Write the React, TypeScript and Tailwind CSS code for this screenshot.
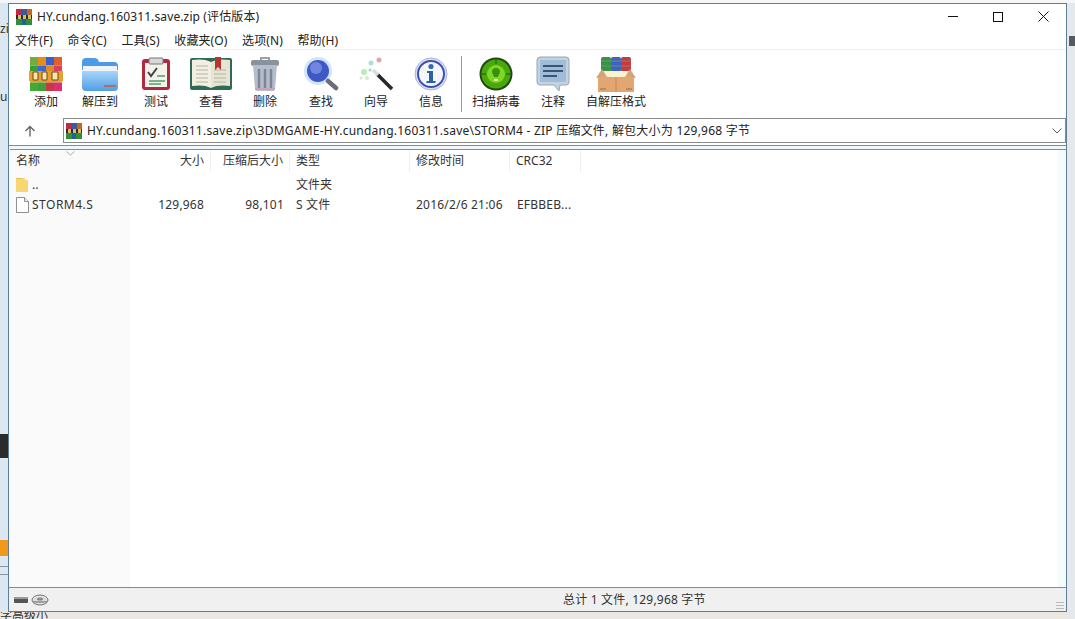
import React from "react";

const font = { fontFamily: '"Noto Sans","Noto Sans CJK SC",sans-serif' };

function Logo({ s = 16 }: { s?: number }) {
  return (
    <svg width={s} height={s} viewBox="0 0 16 16">
      <rect x="0" y="0" width="16" height="16" fill="#7a2a3a" />
      <rect x="0" y="0" width="5" height="6" fill="#c02a4a" />
      <rect x="5" y="0" width="6" height="6" fill="#3a5a9a" />
      <rect x="11" y="0" width="5" height="6" fill="#c06a20" />
      <rect x="0" y="6" width="16" height="4" fill="#2a2a30" />
      <rect x="2" y="6" width="3" height="4" fill="#d8c060" />
      <rect x="7" y="6" width="3" height="4" fill="#d8c060" />
      <rect x="12" y="6" width="3" height="4" fill="#d8c060" />
      <rect x="0" y="10" width="16" height="6" fill="#2f8f3a" />
      <rect x="6" y="10" width="4" height="6" fill="#245f9a" />
    </svg>
  );
}

function AddIcon() {
  const cols = [
    ["#6fae3a", "#3f9a3a", "#e8a020", "#47a83a"],
    ["#e88a20", "#3a6ad0", "#e8a020", "#3fa03a"],
    ["#3a60c8", "#e0892a", "#e8a020", "#c8384a"],
    ["#e0602a", "#d84060", "#e8a020", "#d83070"],
  ];
  return (
    <svg width="34" height="36" viewBox="0 0 34 36">
      {cols.map((c, i) =>
        c.map((f, j) => <rect key={`${i}${j}`} x={1 + i * 8} y={1 + j * 8.5} width="8" height="8.5" fill={f} />),
      )}
      <rect x="0" y="15" width="34" height="10" fill="#e8a030" />
      <path d="M4 16h5v8H4zM13 16h5v8h-5zM23 16h6v8h-6z" fill="#f6e7b0" stroke="#6a4a10" strokeWidth="1" />
    </svg>
  );
}

function FolderBlue() {
  return (
    <svg width="38" height="36" viewBox="0 0 38 36">
      <defs>
        <linearGradient id="fb" x1="0" y1="0" x2="0" y2="1">
          <stop offset="0" stopColor="#a9d6f8" />
          <stop offset="1" stopColor="#4e9ee8" />
        </linearGradient>
      </defs>
      <path d="M1 6a4 4 0 0 1 4-4h8a5 5 0 0 1 5 4h15a4 4 0 0 1 4 4v4H1z" fill="#4d9be8" />
      <rect x="2" y="10" width="34" height="7" fill="#eef4fa" />
      <path d="M1 15h36v16a4 4 0 0 1-4 4H5a4 4 0 0 1-4-4z" fill="url(#fb)" />
      <path d="M23 29h12v2H23z" fill="#b0705a" />
    </svg>
  );
}

function TestIcon() {
  return (
    <svg width="30" height="36" viewBox="0 0 30 36">
      <rect x="1" y="3" width="28" height="31" rx="3" fill="#b2283f" />
      <rect x="4" y="7" width="22" height="24" fill="#f4f2ea" />
      <rect x="8" y="2" width="14" height="6" rx="1" fill="#d8d8d8" stroke="#777" />
      <path d="M7 16l3 4 6-8" fill="none" stroke="#444" strokeWidth="2" />
      <path d="M16 20h8M8 25h16M8 28h12" stroke="#4f9f6f" strokeWidth="1.5" />
    </svg>
  );
}

function BookIcon() {
  return (
    <svg width="42" height="36" viewBox="0 0 42 36">
      <rect x="0" y="2" width="42" height="32" rx="2" fill="#2f6a55" />
      <path d="M2 4c6-1 14-1 19 2v26c-5-3-13-3-19-2z" fill="#f2efe2" />
      <path d="M40 4c-6-1-14-1-19 2v26c5-3 13-3 19-2z" fill="#e8e4d4" />
      <path d="M6 10h12M6 14h12M6 18h12M6 22h12M6 26h12M24 14h12M24 18h12M24 22h12M24 26h12" stroke="#b4b4a6" />
      <path d="M25 1h6v13l-3-3-3 3z" fill="#b8342f" />
    </svg>
  );
}

function TrashIcon() {
  return (
    <svg width="30" height="36" viewBox="0 0 30 36">
      <path d="M11 2h8v3h-8z" fill="none" stroke="#9aa0a8" strokeWidth="2" />
      <rect x="1" y="4" width="28" height="6" rx="2" fill="#8a929c" />
      <path d="M3 9h24l-2 24a2 2 0 0 1-2 2H7a2 2 0 0 1-2-2z" fill="#b4bdcc" />
      <path d="M9 13v19M15 13v19M21 13v19" stroke="#7d8694" strokeWidth="2.500" />
      <path d="M5 33h20" stroke="#d09ab0" strokeWidth="1.500" />
    </svg>
  );
}

function SearchIcon() {
  return (
    <svg width="36" height="36" viewBox="0 0 36 36">
      <circle cx="15" cy="15" r="14" fill="#cfe6f6" />
      <circle cx="15" cy="15" r="11" fill="#3f58c8" />
      <circle cx="13" cy="12" r="6" fill="#7086e0" />
      <path d="M25 25l8 7" stroke="#6a6f76" strokeWidth="4.500" strokeLinecap="round" />
    </svg>
  );
}

function WandIcon() {
  return (
    <svg width="38" height="36" viewBox="0 0 38 36">
      <path d="M20 18l15 15" stroke="#25282c" strokeWidth="3.500" />
      <path d="M16 14l5 5" stroke="#d8dde0" strokeWidth="3.500" />
      <circle cx="22" cy="4" r="2.500" fill="#e8a0b0" />
      <circle cx="14" cy="7" r="2.500" fill="#a8e0e0" />
      <circle cx="7" cy="16" r="3" fill="#b8ecb8" />
      <circle cx="13" cy="14" r="1.500" fill="#9fd8c0" />
      <circle cx="4" cy="22" r="1.500" fill="#cfeecf" />
      <circle cx="10" cy="22" r="2" fill="#d0f0c0" />
    </svg>
  );
}

function InfoIcon() {
  return (
    <svg width="34" height="36" viewBox="0 0 34 36">
      <circle cx="17" cy="18" r="16" fill="#dbe0f0" stroke="#aab4e0" />
      <circle cx="17" cy="18" r="13" fill="#f4f6fb" stroke="#3c50b8" strokeWidth="2" />
      <circle cx="17" cy="10.500" r="2.600" fill="#3a68b8" />
      <path d="M13 15h6v10h2.500v2h-9v-2H15v-8h-2z" fill="#2a62a8" />
    </svg>
  );
}

function ScanIcon() {
  return (
    <svg width="34" height="34" viewBox="0 0 34 34">
      <circle cx="17" cy="17" r="16.500" fill="#1f4a12" />
      <circle cx="17" cy="17" r="14.500" fill="#4aa80c" />
      <circle cx="17" cy="17" r="9" fill="#7cd824" />
      <path d="M17 11a4 4 0 0 1 4 4c0 2-2 3-2 5h-4c0-2-2-3-2-5a4 4 0 0 1 4-4z" fill="#3b8f10" />
      <path d="M15 22h4v2h-4z" fill="#e0f0a0" />
      <path d="M3 17h4M27 17h4M17 3v4" stroke="#2f7f10" strokeWidth="2" />
    </svg>
  );
}

function NoteIcon() {
  return (
    <svg width="34" height="36" viewBox="0 0 34 36">
      <path d="M4 1h26a3 3 0 0 1 3 3v22a3 3 0 0 1-3 3h-6l-1 6-5-6H4a3 3 0 0 1-3-3V4a3 3 0 0 1 3-3z" fill="#c4d2e0" stroke="#9aa6b4" />
      <path d="M4 4h26v22H4z" fill="#9fbcd8" />
      <path d="M7 10h20M7 15h20M7 20h14" stroke="#3a5676" strokeWidth="2" />
    </svg>
  );
}

function SfxIcon() {
  return (
    <svg width="42" height="36" viewBox="0 0 42 36">
      <rect x="6" y="1" width="10" height="15" rx="2" fill="#38904a" />
      <rect x="16" y="1" width="10" height="15" rx="2" fill="#3f62c0" />
      <rect x="26" y="1" width="10" height="15" rx="2" fill="#c63a44" />
      <path d="M6 5h30M6 10h30" stroke="#70b070" strokeOpacity=".6" />
      <path d="M7 15h28l-5 6H12z" fill="#fbf3d0" />
      <path d="M1 22l6-9 5 8zM41 22l-6-9-5 8z" fill="#cfa67a" />
      <path d="M3 21h36v15H3z" fill="#e2a673" />
      <path d="M21 21v15" stroke="#c58a58" />
      <path d="M5 33h6M31 33h6" stroke="#bb8a60" strokeWidth="2" />
    </svg>
  );
}

function FolderSmall() {
  return (
    <svg width="12" height="16" viewBox="0 0 12 16">
      <path d="M0 1h9v2h3v12H0z" fill="#f7d774" />
      <path d="M0 1h6v1H0z" fill="#e8c25a" />
    </svg>
  );
}

function FileSmall() {
  return (
    <svg width="13" height="16" viewBox="0 0 13 16">
      <path d="M.5.5h8l4 4v11H.5z" fill="#fff" stroke="#8f8f8f" />
      <path d="M8.500.5v4h4" fill="#eee" stroke="#8f8f8f" />
    </svg>
  );
}

function Tool({ label, w, children }: { label: string; w: string; children: React.ReactNode }) {
  return (
    <div className={`${w} flex flex-col items-center shrink-0`}>
      <div className="h-9 flex items-center justify-center">{children}</div>
      <div className="mt-[2px] text-[12px] leading-[16px] text-[#222] whitespace-nowrap">{label}</div>
    </div>
  );
}

function Col({ w, right, children, sep = true }: { w: string; right?: boolean; children: React.ReactNode; sep?: boolean }) {
  return (
    <div
      className={`${w} h-[22px] shrink-0 flex items-center px-[6px] text-[12px] text-[#333] ${right ? "justify-end" : ""} ${sep ? "border-r border-[#eeeeee]" : ""}`}
    >
      {children}
    </div>
  );
}

export default function App() {
  return (
    <div className="relative w-[1075px] h-[619px] overflow-hidden bg-[#ebe8e4]" style={font}>
      {/* desktop fragments behind the window */}
      <div className="absolute left-0 top-0 w-[8px] h-[612px] bg-[#dbe7f1]" />
      <div className="absolute left-0 top-[22px] w-[8px] h-[14px] overflow-hidden text-[12px] leading-[14px] text-[#333]">zi</div>
      <div className="absolute left-0 top-[90px] w-[8px] h-[14px] overflow-hidden text-[12px] leading-[14px] text-[#333]">u</div>
      <div className="absolute left-0 top-[434px] w-[8px] h-[24px] bg-[#2b2b2b]" />
      <div className="absolute left-0 top-[540px] w-[8px] h-[16px] bg-[#f09a1a]" />
      <div className="absolute left-0 top-[566px] w-[8px] h-px bg-[#8a949c]" />
      <div className="absolute left-0 top-[574px] w-[8px] h-px bg-[#8a949c]" />
      <div className="absolute right-0 top-0 w-[8px] h-[619px] bg-[#e6e9ec]" />
      <div className="absolute right-0 top-[36px] w-[6px] h-[10px] bg-[#555a60]" />
      <div className="absolute left-0 top-0 w-full h-[3px] bg-[#f4f6f8]" />
      <div className="absolute left-0 bottom-0 w-[60px] h-[7px] text-[12px] leading-[7px] text-[#333] overflow-hidden">字高级小</div>

      {/* window */}
      <div className="absolute left-[8px] top-[3px] w-[1059px] h-[609px] flex flex-col bg-[#eef8fd] border border-[#5b7f98]">
        {/* title bar */}
        <div className="h-[25px] shrink-0 flex items-center bg-white pl-[7px]">
          <Logo />
          <span className="ml-[5px] text-[12px] tracking-[0.12px] text-[#222]">HY.cundang.160311.save.zip (评估版本)</span>
          <div className="ml-auto flex items-center">
            <div className="w-[45px] h-[25px] flex items-center justify-center">
              <div className="w-[10px] h-px bg-[#111]" />
            </div>
            <div className="w-[46px] h-[25px] flex items-center justify-center">
              <div className="w-[10px] h-[10px] border border-[#111]" />
            </div>
            <div className="w-[45px] h-[25px] flex items-center justify-center">
              <svg width="11" height="11" viewBox="0 0 11 11">
                <path d="M.5.5l10 10M10.500.5l-10 10" stroke="#111" />
              </svg>
            </div>
          </div>
        </div>
        {/* menu */}
        <div className="h-[21px] shrink-0 flex items-center bg-white pl-[6px] pt-[3px] gap-[14.6px] text-[12px] tracking-[0.1px] text-[#222] border-b border-[#f0f0f0]">
          <span>文件(F)</span>
          <span>命令(C)</span>
          <span>工具(S)</span>
          <span>收藏夹(O)</span>
          <span>选项(N)</span>
          <span>帮助(H)</span>
        </div>
        {/* toolbar */}
        <div className="h-[68px] shrink-0 flex items-start bg-white pl-[9px] pt-[6px]">
          <Tool label="添加" w="w-[56px]"><AddIcon /></Tool>
          <Tool label="解压到" w="w-[52px]"><FolderBlue /></Tool>
          <Tool label="测试" w="w-[60px]"><TestIcon /></Tool>
          <Tool label="查看" w="w-[50px]"><BookIcon /></Tool>
          <Tool label="删除" w="w-[58px]"><TrashIcon /></Tool>
          <Tool label="查找" w="w-[54px]"><SearchIcon /></Tool>
          <Tool label="向导" w="w-[56px]"><WandIcon /></Tool>
          <Tool label="信息" w="w-[54px]"><InfoIcon /></Tool>
          <div className="w-px h-[56px] bg-[#9a9a9a] ml-[3px] shrink-0" />
          <Tool label="扫描病毒" w="w-[68px]"><ScanIcon /></Tool>
          <Tool label="注释" w="w-[46px]"><NoteIcon /></Tool>
          <Tool label="自解压格式" w="w-[80px]"><SfxIcon /></Tool>
        </div>
        {/* address */}
        <div className="h-[28px] shrink-0 flex items-start bg-white border-b border-[#8a8a8a]">
          <div className="w-[42px] h-[25px] flex items-center justify-center">
            <svg width="12" height="12" viewBox="0 0 12 12">
              <path d="M6 11.500V1.500M1.500 6L6 1.500 10.500 6" fill="none" stroke="#666" strokeWidth="1.400" />
            </svg>
          </div>
          <div className="w-[1004px] ml-[12px] h-[25px] flex items-center border border-[#8a8a8a] pl-[2px] bg-white">
            <Logo />
            <span className="ml-[5px] text-[12px] tracking-[0.23px] text-[#222] whitespace-nowrap">
              HY.cundang.160311.save.zip\3DMGAME-HY.cundang.160311.save\STORM4 - ZIP 压缩文件, 解包大小为 129,968 字节
            </span>
            <svg className="ml-auto mr-[3px]" width="10" height="6" viewBox="0 0 10 6">
              <path d="M.5.5L5 5 9.500.5" fill="none" stroke="#555" />
            </svg>
          </div>
        </div>
        {/* list */}
        <div className="flex-1 min-h-0 flex flex-col bg-white mt-[3px] ml-[1px] border-t border-[#8a8a8a] relative">
          <div className="absolute left-0 top-0 bottom-0 w-[120px] bg-[#fafafa]" />
          <div className="absolute right-0 top-0 bottom-0 w-[8px] bg-[#f3fbff]" />
          <svg className="absolute left-[56px] top-[1px]" width="9" height="5" viewBox="0 0 9 5">
            <path d="M.5.5L4.500 4 8.500.5" fill="none" stroke="#aaa" />
          </svg>
          <div className="relative flex h-[22px] shrink-0">
            <Col w="w-[120px]" sep={false}>名称</Col>
            <Col w="w-[81px]" right>大小</Col>
            <Col w="w-[79px]" right>压缩后大小</Col>
            <Col w="w-[120px]">类型</Col>
            <Col w="w-[100px]">修改时间</Col>
            <Col w="w-[71px]">CRC32</Col>
          </div>
          <div className="relative flex h-[20px] mt-[3px] items-center shrink-0">
            <div className="w-[120px] flex items-center pl-[6px] text-[12px] text-[#333]">
              <FolderSmall />
              <span className="ml-[4px]">..</span>
            </div>
            <div className="w-[160px]" />
            <div className="pl-[6px] text-[12px] text-[#333]">文件夹</div>
          </div>
          <div className="relative flex h-[20px] items-center shrink-0 text-[12px] tracking-[0.2px] text-[#333]">
            <div className="w-[120px] flex items-center pl-[6px]">
              <FileSmall />
              <span className="ml-[3px] tracking-[0.5px]">STORM4.S</span>
            </div>
            <div className="w-[81px] text-right pr-[7px]">129,968</div>
            <div className="w-[79px] text-right pr-[6px]">98,101</div>
            <div className="w-[120px] pl-[6px]">S 文件</div>
            <div className="w-[100px] pl-[6px] whitespace-nowrap">2016/2/6 21:06</div>
            <div className="w-[71px] pl-[7px] whitespace-nowrap">EFBBEB...</div>
          </div>
        </div>
        {/* status bar */}
        <div className="h-[24px] shrink-0 flex items-center bg-[#f0f0f0] border-t border-[#8a8a8a] relative">
          <div className="ml-[4px] flex items-center gap-[2px]">
            <svg width="16" height="10" viewBox="0 0 16 10">
              <rect x="1" y="2" width="14" height="6" rx="1" fill="#555" />
              <rect x="1" y="2" width="14" height="2" fill="#999" />
            </svg>
            <svg width="18" height="12" viewBox="0 0 18 12">
              <ellipse cx="9" cy="6" rx="8" ry="5" fill="#ddd" stroke="#777" />
              <ellipse cx="9" cy="5" rx="3" ry="1.500" fill="#888" />
              <path d="M2 8h14" stroke="#666" />
            </svg>
          </div>
          <div className="absolute left-[554px] text-[12px] tracking-[0.2px] text-[#333]">总计 1 文件, 129,968 字节</div>
          <div className="absolute right-[2px] bottom-[2px] flex flex-col gap-[2px]">
            <div className="w-[8px] h-px bg-[#bbb]" />
            <div className="w-[8px] h-px bg-[#bbb]" />
            <div className="w-[8px] h-px bg-[#bbb]" />
          </div>
        </div>
      </div>
    </div>
  );
}
